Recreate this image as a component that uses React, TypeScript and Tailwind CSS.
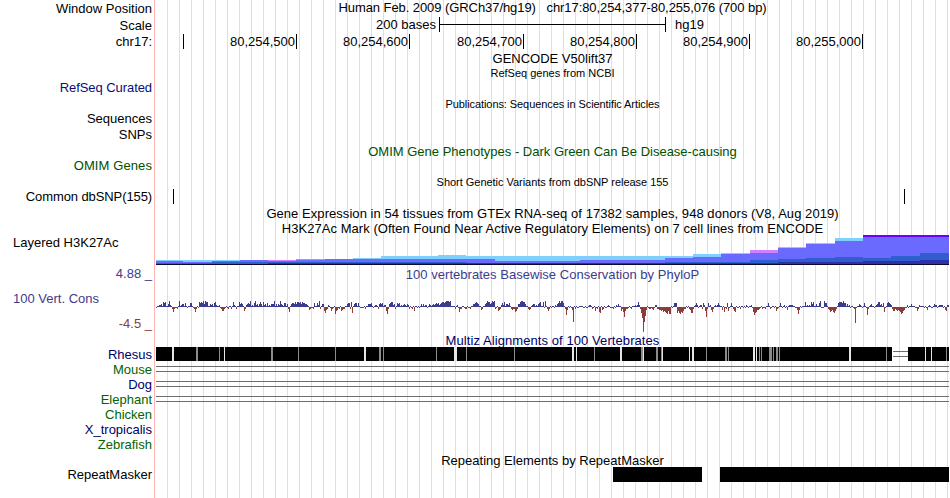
import React from 'react';

type Caption = { text: string; className: string };
type Run = { x: number; v: string };

// Left edge of the data area, in image pixels
const X0 = 156;

const LABELS: Caption[] = [
  { text: 'Window Position', className: 'mt-px' },
  { text: 'Scale', className: 'mt-[2px]' },
  { text: 'chr17:', className: 'mt-px' },
  { text: 'RefSeq Curated', className: 'mt-[31px] tracking-[-0.07px] text-[#0c0c78]' },
  { text: 'Sequences', className: 'mt-4' },
  { text: 'SNPs', className: 'mt-px' },
  { text: 'OMIM Genes', className: 'mt-4 text-[#005000] tracking-[0.1px]' },
  { text: 'Common dbSNP(155)', className: 'mt-4 tracking-[-0.1px]' },
  { text: 'Layered H3K27Ac', className: 'mt-[31px] self-start pl-[13px]' },
  { text: '4.88 _', className: 'mt-4 text-[#3c3c8c]' },
  { text: '100 Vert. Cons', className: 'mt-[10px] self-start pl-[13px] text-[#3c3c8c]' },
  { text: '-4.5 _', className: 'mt-[10px] text-[#8c3c3c]' },
  { text: 'Rhesus', className: 'mt-4 text-[#000064]' },
  { text: 'Mouse', className: 'text-[#006400]' },
  { text: 'Dog', className: 'text-[#000064]' },
  { text: 'Elephant', className: 'text-[#006400]' },
  { text: 'Chicken', className: 'text-[#006400]' },
  { text: 'X_tropicalis', className: 'text-[#000064]' },
  { text: 'Zebrafish', className: 'text-[#006400]' },
  { text: 'RepeatMasker', className: 'mt-[15px]' },
];

const COORDS = ['80,254,500', '80,254,600', '80,254,700', '80,254,800', '80,254,900', '80,255,000'];
const COORD_TICKS = [296, 409, 523, 636, 749, 862];

// Layered H3K27Ac: x, width, top of overlay, top of main, top of mid, top of low, overlay colour
const CYAN = '#7fcfff';
const PINK = '#cf7fff';
const VIOLET = '#6a00ff';
const H3K: [number, number, number, number, number, number, string][] = [
  [156, 27, 260, 261, 263, 264, CYAN],
  [183, 29, 260, 262, 263, 264, CYAN],
  [212, 28, 260, 261, 262, 264, CYAN],
  [240, 28, 260, 260, 262, 264, CYAN],
  [268, 28, 260, 261, 262, 263, PINK],
  [296, 29, 259, 260, 262, 263, PINK],
  [325, 28, 259, 259, 262, 263, CYAN],
  [353, 28, 258, 259, 262, 263, CYAN],
  [381, 57, 256, 259, 262, 263, CYAN],
  [438, 28, 255, 259, 262, 263, CYAN],
  [466, 29, 256, 259, 263, 263, CYAN],
  [495, 85, 256, 261, 263, 263, CYAN],
  [580, 85, 256, 260, 263, 263, CYAN],
  [665, 28, 256, 258, 262, 263, CYAN],
  [693, 28, 254, 257, 262, 263, CYAN],
  [721, 29, 253, 254, 262, 263, CYAN],
  [750, 28, 250, 253, 260, 263, PINK],
  [778, 28, 247, 248, 259, 262, CYAN],
  [806, 29, 243, 244, 258, 262, CYAN],
  [835, 28, 238, 241, 257, 262, CYAN],
  [863, 28, 235, 237, 258, 261, VIOLET],
  [891, 29, 235, 237, 256, 261, VIOLET],
  [920, 29, 235, 237, 253, 260, VIOLET],
];

// One character per pixel column: digits rise above the axis, letters (a = 1) drop below it
const PHYLOP: Run[] = [
  { x: 156, v: 'a11223154511366' },
  { x: 170, v: '21bebaab161233141a11441abeb1' },
  { x: 199, v: '545463655113231452112abddba1ab11b1521b' },
  { x: 237, v: '1153431db2343612146231353152314' },
  { x: 268, v: '12133361313263214413be1344353554535443321ab' },
  { x: 309, v: 'cbaab411426b133dfcb21adba1gdcab1dcbb1bb1' },
  { x: 346, v: '1344b5f1344141aaaa1b1133341a1221b3434122dab' },
  { x: 386, v: 'dgb345523b1434121232132b1ab1d11a1a131312' },
  { x: 426, v: '2a1321232343423453' },
  { x: 443, v: '545666561111b12aebb11abb1aab1133454311cb11' },
  { x: 485, v: '3465534656ba1dcb2425133241bcb2a1315' },
  { x: 514, v: 'bedb3356655311bcb1233121345115a71bdb1a1' },
  { x: 553, v: '1a213464674' + '1bhc1a1aco' },
  { x: 574, v: '1b1aa1111aa1aa1221ba1dab1ef1a1a11' },
  { x: 602, v: 'cb1aa121aaab1a21311dbejdbb' },
  { x: 628, v: 'a1ab11121252b' },
  { x: 641, v: 'fkwoic1abbabc' },
  { x: 654, v: 'a22bbccdcedefgdgg1a1444fdf' },
  { x: 680, v: 'gefdbb1a1bcffb1242a122b42djb412ceb1212' },
  { x: 718, v: '4211c1eab4da141bde1aa1b11a1a21a1' },
  { x: 750, v: '12aehfeccba1baab114121' },
  { x: 768, v: '41ba11a1dba141a12a1cdb1' },
  { x: 788, v: '1222211aacgc1a1b' },
  { x: 802, v: '1115121215351131146' },
  { x: 824, v: '6441bcedcefdb1455546441312a1' },
  { x: 852, v: '1abpa11321a141ahb1' },
  { x: 870, v: '2311a123552314ea145432bdefdc' },
  { x: 894, v: 'dbcdcdegfdcaa2a1' },
  { x: 908, v: 'a113111aadb21111a1ac121aa1322a12222a1cd222' },
];

const PHYLOP_END = 949;

const phylopBars = () => {
  const bars: { x: number; h: number; up: boolean }[] = [];
  PHYLOP.forEach((run, i) => {
    const end = i + 1 < PHYLOP.length ? PHYLOP[i + 1].x : PHYLOP_END;
    for (let x = run.x; x < end; x++) {
      const c = run.v[x - run.x] ?? 'a';
      const up = c >= '0' && c <= '9';
      bars.push({ x, up, h: up ? Number(c) : c.charCodeAt(0) - 96 });
    }
  });
  return bars;
};

// Breaks in the Rhesus alignment: x, width, light
const RHESUS_GAPS: [number, number, boolean][] = [
  [172, 2, true], [196, 2, false], [219, 1, false], [224, 1, true], [271, 2, false], [298, 1, false],
  [335, 1, false], [364, 2, true], [379, 2, false], [383, 1, false], [436, 1, false], [454, 3, true],
  [466, 1, false], [514, 1, false], [572, 2, true], [576, 1, true], [594, 1, false], [620, 2, true],
  [641, 2, false], [643, 1, true], [656, 2, false], [661, 1, false], [662, 1, true], [689, 1, true],
  [692, 2, true], [706, 1, false], [725, 2, false], [728, 1, false], [753, 2, true], [756, 1, true],
  [759, 1, false], [761, 1, false], [769, 3, false], [773, 1, false], [776, 2, false], [779, 1, false],
  [849, 2, true], [886, 1, false], [925, 1, true], [931, 1, true], [946, 1, false],
];

const Title: React.FC<Caption> = ({ text, className }) => (
  <div className={`flex justify-center leading-[15px] whitespace-pre ${className}`}>
    <span>{text}</span>
  </div>
);

const Ruler: React.FC = () => (
  <>
    <div className="mt-[2px] flex h-[15px] leading-[15px]">
      <span className="w-[280px] text-right">200 bases</span>
      <div className="ml-[3px] flex h-[15px] w-[227px] items-center border-x border-black">
        <div className="h-px w-full bg-black" />
      </div>
      <span className="ml-[9px]">hg19</span>
    </div>
    <div className="mt-[2px] flex h-[15px] leading-[15px]">
      <div className="ml-[27px] h-[15px] w-px bg-black" />
      {COORDS.map((label, i) => (
        <div
          key={label}
          className="flex h-[15px] justify-end border-r border-black pr-px"
          style={{ width: COORD_TICKS[i] - (i ? COORD_TICKS[i - 1] : 183) }}
        >
          {label}
        </div>
      ))}
    </div>
  </>
);

const H3KTrack: React.FC = () => (
  <svg className="block h-[30px] w-[793px]" viewBox={`${X0} 235 793 30`} shapeRendering="crispEdges">
    {H3K.map(([x, w, top, main, mid, low, fill]) => (
      <g key={x}>
        <rect x={x} y={top} width={w} height={264 - top} fill={fill} />
        <rect x={x} y={main} width={w} height={264 - main} fill="#6a6aff" />
        <rect x={x} y={mid} width={w} height={264 - mid} fill="#2f5fcf" />
        <rect x={x} y={low} width={w} height={264 - low} fill="#2f2fa8" />
      </g>
    ))}
    <rect x="156" y="264" width="793" height="1" fill="#0a0a30" />
  </svg>
);

const PhyloPTrack: React.FC = () => (
  <svg className="mt-[19px] block h-[32px] w-[793px]" viewBox={`${X0} 301 793 32`} shapeRendering="crispEdges">
    {phylopBars().map(({ x, h, up }) => (
      <rect key={x} x={x} y={up ? 307 - h : 307} width="1" height={h} fill={up ? '#3c3c8c' : '#8c3c3c'} />
    ))}
    <rect x="643" y="330" width="1" height="2" fill="#ff00ff" />
  </svg>
);

const MultizTrack: React.FC = () => (
  <svg className="block h-[60px] w-[793px]" viewBox={`${X0} 347 793 60`} shapeRendering="crispEdges">
    <rect x="156" y="347" width="736" height="14" fill="#000" />
    <rect x="908" y="347" width="41" height="14" fill="#000" />
    {RHESUS_GAPS.map(([x, w, light]) => (
      <rect key={x} x={x} y="347" width={w} height="14" fill={light ? '#e6e6e6' : '#8c8c8c'} />
    ))}
    <path d="M893 351.5h15M893 356.5h15" stroke="#6e6e6e" />
    <path d="M156 366.5h793M156 371.5h793M156 381.5h793M156 386.5h793M156 396.5h793M156 401.5h793" stroke="#6e6e6e" />
  </svg>
);

const App: React.FC = () => (
  <div className="flex h-[498px] w-[950px] overflow-hidden bg-white font-['Liberation_Sans',Arial,sans-serif] text-[13px] text-black">
    <div className="flex w-[154px] shrink-0 flex-col items-end">
      {LABELS.map(({ text, className }) => (
        <div key={text} className={`h-[15px] shrink-0 pr-[2px] leading-[15px] whitespace-nowrap ${className}`}>
          {text}
        </div>
      ))}
    </div>
    <div className="w-px shrink-0 bg-[#ffb4b4]" />
    {/* guide lines every 12px, the first one clipped away by the padding */}
    <div className="h-[498px] w-[794px] shrink-0 bg-[linear-gradient(to_right,#dcdcf8_1px,transparent_1px)] bg-[length:12px_100%] bg-clip-content pl-px">
      <Title text="Human Feb. 2009 (GRCh37/hg19)   chr17:80,254,377-80,255,076 (700 bp)" className="h-[15px] tracking-[-0.07px]" />
      <Ruler />
      <Title text="GENCODE V50lift37" className="mt-[2px] h-[15px]" />
      <Title text="RefSeq genes from NCBI" className="h-[15px] text-[11px]" />
      <Title text="Publications: Sequences in Scientific Articles" className="mt-4 h-[15px] text-[11px] tracking-[-0.08px]" />
      <Title text="OMIM Gene Phenotypes - Dark Green Can Be Disease-causing" className="mt-8 h-[15px] text-[#005000]" />
      <Title text="Short Genetic Variants from dbSNP release 155" className="mt-4 h-[14px] text-[11px] tracking-[-0.03px]" />
      <div className="flex h-[15px]">
        <div className="ml-[17px] w-px bg-black" />
        <div className="ml-[730px] w-px bg-black" />
      </div>
      <Title text="Gene Expression in 54 tissues from GTEx RNA-seq of 17382 samples, 948 donors (V8, Aug 2019)" className="mt-[2px] h-[15px] tracking-[0.055px]" />
      <Title text="H3K27Ac Mark (Often Found Near Active Regulatory Elements) on 7 cell lines from ENCODE" className="h-[14px] tracking-[0.045px]" />
      <H3KTrack />
      <Title text="100 vertebrates Basewise Conservation by PhyloP" className="mt-[2px] h-[15px] tracking-[0.03px] text-[#3c3c8c]" />
      <PhyloPTrack />
      <Title text="Multiz Alignments of 100 Vertebrates" className="h-[14px] tracking-[0.08px] text-[#000064]" />
      <MultizTrack />
      <Title text="Repeating Elements by RepeatMasker" className="mt-[46px] h-[14px]" />
      <div className="flex h-[15px]">
        <div className="ml-[457px] w-[89px] bg-black" />
        <div className="ml-[18px] w-[229px] bg-black" />
      </div>
    </div>
  </div>
);

export default App;
